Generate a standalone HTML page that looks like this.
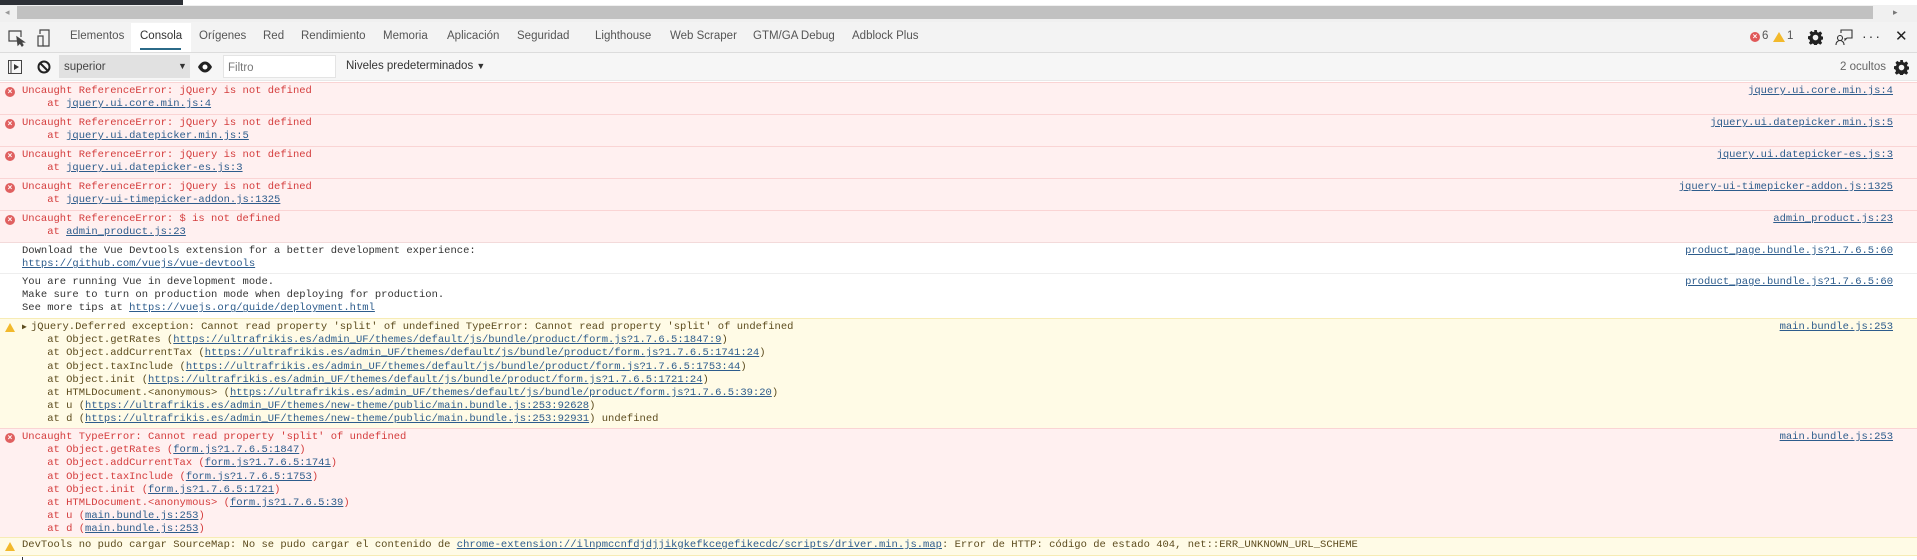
<!DOCTYPE html>
<html><head><meta charset="utf-8"><style>
*{margin:0;padding:0;box-sizing:border-box}
body{width:1917px;height:560px;overflow:hidden;background:#fff;position:relative;font-family:"Liberation Sans",sans-serif}
.abs{position:absolute}
.tab{position:absolute;top:30px;font-size:11.5px;color:#555;white-space:nowrap}
.row{position:absolute;left:0;width:1917px;font-family:"Liberation Mono",monospace;font-size:10.5px;line-height:13.2px;padding-top:3px;white-space:pre}
.err{background:#fff0f0;border-top:1px solid #fad4d4;color:#d43c3c}
.warn{background:#fffbe6;border-top:1px solid #f7ecb5;color:#5c4b1d}
.info{background:#fff;border-top:1px solid #eee;color:#333}
.txt{position:absolute;left:22px;top:2px}
a{color:#2d5c8c;text-decoration:underline}
.src{position:absolute;right:24px;top:2px}
.ei{position:absolute;left:5px;top:4px;width:10px;height:10px;border-radius:50%;background:#e06060;color:#fff;font:bold 8px/10px "Liberation Sans",sans-serif;text-align:center}
.wi{position:absolute;left:5px;width:0;height:0;border-left:5px solid transparent;border-right:5px solid transparent;border-bottom:9px solid #f2b92c}
</style></head><body>
<div class="abs" style="left:0;top:0;width:183px;height:5px;background:#2d3036"></div>
<div class="abs" style="left:0;top:5px;width:1917px;height:17px;background:#f0f0f0"></div>
<div class="abs" style="left:17px;top:6px;width:1856px;height:13px;background:#c1c1c1"></div>
<div class="abs" style="left:5px;top:7px;font-size:9px;color:#999">◂</div>
<div class="abs" style="left:1893px;top:7px;font-size:9px;color:#777">▸</div>
<div class="abs" style="left:0;top:22px;width:1917px;height:31px;background:#f3f3f3;border-bottom:1px solid #dcdcdc"></div>
<div class="abs" style="left:131px;top:23px;width:60px;height:29px;background:#fff"></div>
<div class="abs" style="left:140px;top:48px;width:41px;height:2px;background:#2b6a88"></div>
<svg class="abs" style="left:7px;top:29px" width="50" height="18" viewBox="0 0 50 18" fill="none" stroke="#444" stroke-width="1.2"><path d="M10 12H2V2h12v6"/><path d="M10 8l1 8 2-2 2 3 1-1-2-3h3z" fill="#444"/><rect x="31" y="7" width="5" height="10"/><path d="M33 5V1h9v16h-6"/></svg>
<div class="tab" style="left:70px">Elementos</div>
<div class="tab" style="left:140px;color:#333">Consola</div>
<div class="tab" style="left:199px">Orígenes</div>
<div class="tab" style="left:263px">Red</div>
<div class="tab" style="left:301px">Rendimiento</div>
<div class="tab" style="left:383px">Memoria</div>
<div class="tab" style="left:447px">Aplicación</div>
<div class="tab" style="left:517px">Seguridad</div>
<div class="tab" style="left:595px">Lighthouse</div>
<div class="tab" style="left:670px">Web Scraper</div>
<div class="tab" style="left:753px">GTM/GA Debug</div>
<div class="tab" style="left:852px">Adblock Plus</div>
<div class="abs" style="left:1750px;top:32px;width:10px;height:10px;border-radius:50%;background:#e05858;color:#fff;font:bold 8px/10px sans-serif;text-align:center">×</div>
<div class="tab" style="left:1762px;top:30px">6</div>
<div class="abs" style="left:1773px;top:32px;border-left:6px solid transparent;border-right:6px solid transparent;border-bottom:10px solid #f2b92c"></div>
<div class="tab" style="left:1787px;top:30px">1</div>
<svg class="abs" style="left:1808px;top:30px" width="15" height="15" viewBox="0 0 16 16"><path fill="#222" d="M6.6 0h2.8l.4 2.2 1.4.6 1.9-1.3 2 2-1.3 1.9.6 1.4 2.2.4v2.8l-2.2.4-.6 1.4 1.3 1.9-2 2-1.9-1.3-1.4.6-.4 2.2H6.6l-.4-2.2-1.4-.6-1.900 1.3-2-2 1.3-1.9-.6-1.4L0 9.4V6.6l2.2-.4.6-1.4-1.3-1.9 2-2 1.9 1.3 1.4-.6zM8 5a3 3 0 100 6 3 3 0 000-6z"/></svg>
<svg class="abs" style="left:1835px;top:29px" width="18" height="17" viewBox="0 0 18 17" fill="none" stroke="#333" stroke-width="1.1"><path d="M6 4V1h11v8h-5l-2 2v-2"/><circle cx="5" cy="9" r="2.5"/><path d="M1 16c0-3 2-4.5 4-4.5s4 1.5 4 4.5"/></svg>
<div class="tab" style="left:1862px;top:28px;font-size:14px;color:#333;letter-spacing:2px">···</div>
<div class="tab" style="left:1895px;top:27px;font-size:15px;color:#222">✕</div>
<div class="abs" style="left:0;top:53px;width:1917px;height:28px;background:#f6f6f6;border-bottom:1px solid #e8e8e8"></div>
<svg class="abs" style="left:8px;top:60px" width="14" height="14" viewBox="0 0 14 14"><rect x="0.5" y="0.5" width="13" height="13" fill="none" stroke="#444"/><path d="M3 1v12" stroke="#444"/><path d="M6 4l5 3-5 3z" fill="#333"/></svg>
<svg class="abs" style="left:37px;top:60px" width="14" height="14" viewBox="0 0 14 14" fill="none" stroke="#222" stroke-width="2"><circle cx="7" cy="7" r="5.5"/><path d="M3 3l8 8"/></svg>
<div class="abs" style="left:59px;top:55px;width:131px;height:23px;background:#e1e1e1"></div>
<div class="tab" style="left:64px;top:61px;color:#444">superior</div>
<div class="abs" style="left:178px;top:61px;font-size:9px;color:#333">▼</div>
<svg class="abs" style="left:198px;top:61px" width="14" height="12" viewBox="0 0 14 12"><path d="M0 6c2-4 5-5.5 7-5.5S12 2 14 6c-2 4-5 5.5-7 5.5S2 10 0 6z" fill="#222"/><circle cx="7" cy="6" r="2.5" fill="#fff"/></svg>
<div class="abs" style="left:223px;top:55px;width:113px;height:23px;background:#fff;border:1px solid #e4e4e4"></div>
<div class="tab" style="left:228px;top:62px;color:#777">Filtro</div>
<div class="tab" style="left:346px;top:60px;color:#333">Niveles predeterminados <span style="font-size:9px">▼</span></div>
<div class="tab" style="left:1840px;top:61px;color:#666">2 ocultos</div>
<svg class="abs" style="left:1894px;top:60px" width="15" height="15" viewBox="0 0 16 16"><path fill="#222" d="M6.6 0h2.8l.4 2.2 1.4.6 1.9-1.3 2 2-1.3 1.9.6 1.4 2.2.4v2.8l-2.2.4-.6 1.4 1.3 1.9-2 2-1.9-1.3-1.4.6-.4 2.2H6.6l-.4-2.2-1.4-.6-1.9 1.3-2-2 1.3-1.9-.6-1.4L0 9.4V6.6l2.2-.4.6-1.4-1.3-1.9 2-2 1.9 1.3 1.4-.6zM8 5a3 3 0 100 6 3 3 0 000-6z"/></svg>
<div class="row err" style="top:82px;height:32px"><div class="ei">×</div><div class="txt">Uncaught ReferenceError: jQuery is not defined
    at <a>jquery.ui.core.min.js:4</a></div><a class="src">jquery.ui.core.min.js:4</a></div>
<div class="row err" style="top:114px;height:32px"><div class="ei">×</div><div class="txt">Uncaught ReferenceError: jQuery is not defined
    at <a>jquery.ui.datepicker.min.js:5</a></div><a class="src">jquery.ui.datepicker.min.js:5</a></div>
<div class="row err" style="top:146px;height:32px"><div class="ei">×</div><div class="txt">Uncaught ReferenceError: jQuery is not defined
    at <a>jquery.ui.datepicker-es.js:3</a></div><a class="src">jquery.ui.datepicker-es.js:3</a></div>
<div class="row err" style="top:178px;height:32px"><div class="ei">×</div><div class="txt">Uncaught ReferenceError: jQuery is not defined
    at <a>jquery-ui-timepicker-addon.js:1325</a></div><a class="src">jquery-ui-timepicker-addon.js:1325</a></div>
<div class="row err" style="top:210px;height:32px"><div class="ei">×</div><div class="txt">Uncaught ReferenceError: $ is not defined
    at <a>admin_product.js:23</a></div><a class="src">admin_product.js:23</a></div>
<div class="row info" style="top:242px;height:31px;border-top-color:#f3dada"><div class="txt">Download the Vue Devtools extension for a better development experience:
<a>https://github.com/vuejs/vue-devtools</a></div><a class="src">product_page.bundle.js?1.7.6.5:60</a></div>
<div class="row info" style="top:273px;height:45px"><div class="txt">You are running Vue in development mode.
Make sure to turn on production mode when deploying for production.
See more tips at <a>https://vuejs.org/guide/deployment.html</a></div><a class="src">product_page.bundle.js?1.7.6.5:60</a></div>
<div class="row warn" style="top:318px;height:110px"><div class="wi" style="top:4px"></div><div class="txt"><span style="display:inline-block;width:9px;font-size:8px">▶</span>jQuery.Deferred exception: Cannot read property 'split' of undefined TypeError: Cannot read property 'split' of undefined
    at Object.getRates (<a>https://ultrafrikis.es/admin_UF/themes/default/js/bundle/product/form.js?1.7.6.5:1847:9</a>)
    at Object.addCurrentTax (<a>https://ultrafrikis.es/admin_UF/themes/default/js/bundle/product/form.js?1.7.6.5:1741:24</a>)
    at Object.taxInclude (<a>https://ultrafrikis.es/admin_UF/themes/default/js/bundle/product/form.js?1.7.6.5:1753:44</a>)
    at Object.init (<a>https://ultrafrikis.es/admin_UF/themes/default/js/bundle/product/form.js?1.7.6.5:1721:24</a>)
    at HTMLDocument.&lt;anonymous&gt; (<a>https://ultrafrikis.es/admin_UF/themes/default/js/bundle/product/form.js?1.7.6.5:39:20</a>)
    at u (<a>https://ultrafrikis.es/admin_UF/themes/new-theme/public/main.bundle.js:253:92628</a>)
    at d (<a>https://ultrafrikis.es/admin_UF/themes/new-theme/public/main.bundle.js:253:92931</a>) undefined</div><a class="src">main.bundle.js:253</a></div>
<div class="row err" style="top:428px;height:109px"><div class="ei">×</div><div class="txt">Uncaught TypeError: Cannot read property 'split' of undefined
    at Object.getRates (<a>form.js?1.7.6.5:1847</a>)
    at Object.addCurrentTax (<a>form.js?1.7.6.5:1741</a>)
    at Object.taxInclude (<a>form.js?1.7.6.5:1753</a>)
    at Object.init (<a>form.js?1.7.6.5:1721</a>)
    at HTMLDocument.&lt;anonymous&gt; (<a>form.js?1.7.6.5:39</a>)
    at u (<a>main.bundle.js:253</a>)
    at d (<a>main.bundle.js:253</a>)</div><a class="src">main.bundle.js:253</a></div>
<div class="row warn" style="top:537px;height:19px;border-bottom:1px solid #f7ecb5"><div class="wi" style="top:4px"></div><div class="txt" style="top:1px">DevTools no pudo cargar SourceMap: No se pudo cargar el contenido de <a>chrome-extension://ilnpmccnfdjdjjikgkefkcegefikecdc/scripts/driver.min.js.map</a>: Error de HTTP: código de estado 404, net::ERR_UNKNOWN_URL_SCHEME</div></div>
<div class="abs" style="left:22px;top:557px;width:1px;height:3px;background:#333"></div>
</body></html>
